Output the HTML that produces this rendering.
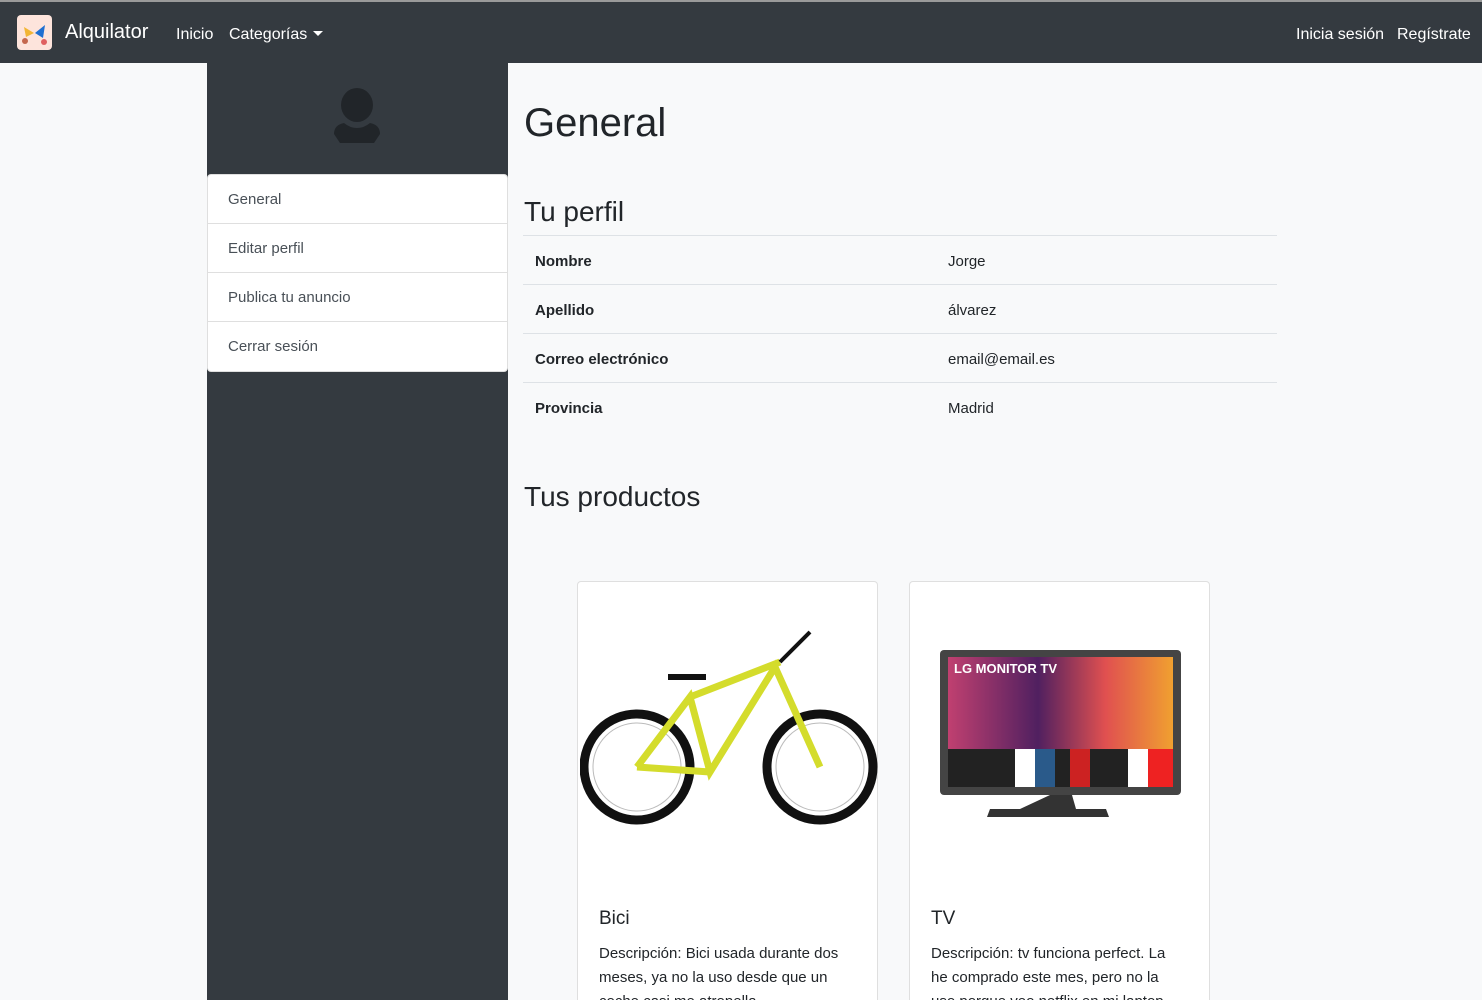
<!DOCTYPE html>
<html><head><meta charset="utf-8"><style>
*{box-sizing:border-box;margin:0;padding:0}
html{width:1482px;height:1000px;overflow:hidden}
body{width:1482px;height:1000px;overflow:hidden;background:#f8f9fa;font-family:"Liberation Sans",sans-serif;color:#212529;position:relative}
.nav{position:absolute;left:0;top:0;width:1482px;height:63px;background:#343a40;border-top:2px solid #9a9a9a}
.nav span{position:absolute;color:#fff;font-size:16px}
.side{position:absolute;left:207px;top:63px;width:301px;height:937px;background:#343a40}
.list{position:absolute;left:207px;top:174px;width:301px;background:#fff;border:1px solid rgba(0,0,0,.125);border-radius:4px}
.list div{height:49px;line-height:50px;padding-left:20px;font-size:15px;color:#495057;border-bottom:1px solid rgba(0,0,0,.125)}
.list div:last-child{border-bottom:0}
h1{position:absolute;left:524px;top:101px;font-size:40px;font-weight:500}
h2{position:absolute;left:524px;font-size:28px;font-weight:500}
table{position:absolute;left:523px;top:235px;width:754px;border-collapse:collapse;font-size:15px}
td{height:49px;border-top:1px solid #dee2e6;padding-left:12px;padding-top:2px}
td:first-child{font-weight:bold;width:413px}
.card{position:absolute;top:581px;width:301px;height:440px;background:#fff;border:1px solid rgba(0,0,0,.125);border-radius:4px}
.card h5{position:absolute;left:21px;top:326px;font-size:19px;font-weight:500}
.card p{position:absolute;left:21px;top:360px;width:252px;font-size:15px;line-height:24px;color:#212529}
</style></head><body>
<div class="nav">
<div style="position:absolute;left:17px;top:13px;width:35px;height:35px;background:#fde4dc;border-radius:4px"></div>
<svg style="position:absolute;left:17px;top:13px" width="35" height="35"><path d="M7 12l10 6-8 4z" fill="#f2b534"/><path d="M28 10l-10 8 8 5z" fill="#1f6fd1"/><circle cx="8" cy="26" r="3" fill="#c4674e"/><circle cx="27" cy="27" r="3" fill="#e06060"/></svg>
<span style="left:65px;top:19px;font-size:20px">Alquilator</span>
<span style="left:176px;top:24px">Inicio</span>
<span style="left:229px;top:24px">Categorías</span>
<svg style="position:absolute;left:313px;top:29px" width="10" height="6"><path d="M0 0h10L5 5z" fill="#fff"/></svg>
<span style="left:1296px;top:24px">Inicia sesión</span>
<span style="left:1397px;top:24px">Regístrate</span>
</div>
<div class="side"></div>
<svg style="position:absolute;left:330px;top:88px" width="54" height="56"><ellipse cx="27" cy="17" rx="16" ry="17" fill="#212529"/><path d="M4 46q0-9 10-11 6 5 13 5t13-5q10 2 10 11l-6 9H10z" fill="#212529"/></svg>
<div class="list"><div>General</div><div>Editar perfil</div><div>Publica tu anuncio</div><div>Cerrar sesión</div></div>
<h1>General</h1>
<h2 style="top:196px">Tu perfil</h2>
<table><tr><td>Nombre</td><td>Jorge</td></tr><tr><td>Apellido</td><td>álvarez</td></tr><tr><td>Correo electrónico</td><td>email@email.es</td></tr><tr><td>Provincia</td><td>Madrid</td></tr></table>
<h2 style="top:481px">Tus productos</h2>
<div class="card" style="left:577px">
<svg style="position:absolute;left:2px;top:40px" width="298" height="210">
<circle cx="57" cy="145" r="53" fill="none" stroke="#111" stroke-width="9"/><circle cx="57" cy="145" r="44" fill="none" stroke="#bbb" stroke-width="1"/>
<circle cx="240" cy="145" r="53" fill="none" stroke="#111" stroke-width="9"/><circle cx="240" cy="145" r="44" fill="none" stroke="#bbb" stroke-width="1"/>
<path d="M57 145L110 75 130 150 195 45 240 145M110 75l90-35M130 150L57 145" stroke="#d4dc2c" stroke-width="7" fill="none"/>
<path d="M88 55h38" stroke="#111" stroke-width="6"/><path d="M200 40l30-30" stroke="#111" stroke-width="4"/>
</svg>
<h5>Bici</h5><p>Descripción: Bici usada durante dos meses, ya no la uso desde que un coche casi me atropella</p></div>
<div class="card" style="left:909px">
<svg style="position:absolute;left:30px;top:68px" width="242" height="175">
<defs><linearGradient id="g" x1="0" x2="1"><stop offset="0" stop-color="#c04070"/><stop offset=".4" stop-color="#502060"/><stop offset=".7" stop-color="#e05050"/><stop offset="1" stop-color="#f0a030"/></linearGradient></defs>
<rect x="0" y="0" width="241" height="145" rx="4" fill="#444"/>
<rect x="8" y="7" width="225" height="92" fill="url(#g)"/>
<rect x="8" y="99" width="225" height="38" fill="#222"/>
<rect x="75" y="99" width="20" height="38" fill="#fff"/><rect x="95" y="99" width="20" height="38" fill="#2a5a8a"/><rect x="130" y="99" width="20" height="38" fill="#c22"/><rect x="188" y="99" width="20" height="38" fill="#fff"/><rect x="208" y="99" width="25" height="38" fill="#e22"/>
<path d="M110 145h22l4 14h30l3 8H47l3-8h30z" fill="#333"/>
<text x="14" y="23" fill="#fff" font-size="13" font-family="Liberation Sans" font-weight="bold">LG MONITOR TV</text>
</svg>
<h5>TV</h5><p>Descripción: tv funciona perfect. La he comprado este mes, pero no la uso porque veo netflix en mi laptop</p></div>
</body></html>
